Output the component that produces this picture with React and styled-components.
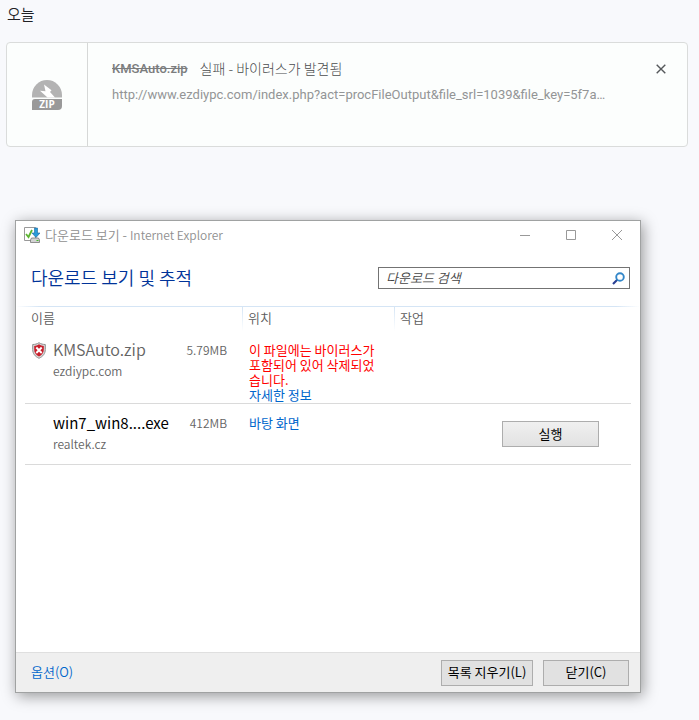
import styled, { createGlobalStyle } from "styled-components";

const GlobalStyle = createGlobalStyle`
  * {
    box-sizing: border-box;
  }

  body {
    margin: 0;
    background-color: #f8f9fc;
    font-family: "Noto Sans CJK KR", sans-serif;
    font-size: 13px;
    font-weight: 350;
  }
`;

const Page = styled.main`
  padding: 3px 11px 27px 6px;
`;

const DateHeading = styled.h2`
  margin: 0 0 17px 1px;
  font-size: 15px;
  font-weight: 350;
  line-height: 22px;
  color: #202124;
`;

const DownloadCard = styled.section`
  display: flex;
  min-height: 105px;
  margin-bottom: 73px;
  background-color: #fcfefd;
  border: 1px solid #dadcdb;
  border-radius: 4px;
`;

const FileIcon = styled.div`
  display: flex;
  align-items: center;
  justify-content: center;
  width: 81px;
  flex-shrink: 0;
  border-right: 1px solid #d6d8d7;
`;

const CardBody = styled.div`
  flex: 1;
  min-width: 0;
  padding: 16px 24px;
`;

const CardTitle = styled.div`
  display: flex;
  gap: 12px;
  height: 20px;
  margin-bottom: 6px;
  line-height: 20px;
  color: #5f6163;
`;

const FileName = styled.s`
  font-family: Roboto, sans-serif;
  font-weight: 500;
  color: #7b7d7e;
`;

const FileStatus = styled.span`
  font-size: 14px;
  font-weight: 300;
  line-height: 18px;
  color: #4a4c4e;
`;

const FileUrl = styled.div`
  overflow: hidden;
  font-family: Roboto, sans-serif;
  font-weight: 400;
  line-height: 20px;
  color: #939596;
  white-space: nowrap;
  text-overflow: ellipsis;
`;

const RemoveButton = styled.button`
  display: flex;
  align-items: center;
  justify-content: center;
  width: 24px;
  height: 24px;
  margin: 14px 14px 0 0;
  padding: 0;
  background: none;
  border: none;
  cursor: pointer;
`;

const Window = styled.section`
  margin: 0 47px 0 9px;
  background-color: #fff;
  border: 1px solid #a0a2a2;
  box-shadow: 2px 3px 14px rgba(0, 0, 0, 0.4);
`;

const TitleBar = styled.header`
  display: flex;
  align-items: center;
  height: 29px;
  padding: 0 0 1px 8px;
  color: #909090;
`;

const TitleText = styled.span`
  flex: 1;
  margin-left: 5px;
  padding-bottom: 2px;
  font-size: 13px;
`;

const AppName = styled.span`
  font-size: 12px;
`;

const WindowButton = styled.button`
  display: flex;
  align-items: center;
  justify-content: center;
  width: 46px;
  height: 28px;
  padding: 0;
  background: none;
  border: none;
`;

const Toolbar = styled.div`
  display: flex;
  align-items: center;
  justify-content: space-between;
  height: 56px;
  padding: 0 10px 0 15px;
`;

const Heading = styled.h1`
  margin: 0;
  padding-bottom: 3px;
  font-size: 18px;
  font-weight: 350;
  color: #003399;
`;

const SearchBox = styled.label`
  display: flex;
  align-items: center;
  width: 252px;
  height: 22px;
  padding: 0 4px 0 7px;
  border: 1px solid #737373;
`;

const SearchInput = styled.input`
  flex: 1;
  min-width: 0;
  padding: 0 0 2px;
  background: none;
  border: none;
  outline: none;
  font-family: inherit;
  font-size: 13px;
  font-weight: 350;

  &::placeholder {
    color: #444;
    font-style: italic;
    opacity: 1;
  }
`;

const Divider = styled.div`
  height: 1px;
  background: linear-gradient(to right, #fff, #d5e5f5 24px, #d5e5f5 calc(100% - 24px), #fff);
`;

const ListArea = styled.div`
  min-height: 345px;
  padding: 0 9px;
`;

const DownloadTable = styled.table`
  width: 100%;
  table-layout: fixed;
  border-spacing: 0;
`;

const HeadCell = styled.th`
  width: ${({ $width }) => $width || "auto"};
  height: 24px;
  padding: 0 6px 4px;
  background: ${({ $divided }) =>
    $divided ? "linear-gradient(#d5e5f5, #fff) left / 1px 100% no-repeat" : "none"};
  font-weight: 350;
  line-height: 15px;
  color: #5c5c5c;
  text-align: left;
`;

const Cell = styled.td`
  height: 61px;
  padding: 11px 7px 1px;
  border-bottom: 1px solid #dadada;
  line-height: 15px;
  vertical-align: top;
`;

const FileEntry = styled.div`
  display: grid;
  grid-template-columns: 14px 1fr auto;
  column-gap: 7px;
  row-gap: 6px;
  padding-right: 8px;
  color: #646464;
`;

const EntryIcon = styled.span`
  height: 15px;
`;

const EntryName = styled.span`
  font-size: ${({ $blocked }) => ($blocked ? "16px" : "15px")};
  font-weight: ${({ $blocked }) => ($blocked ? 350 : 400)};
  color: ${({ $blocked }) => ($blocked ? "#646464" : "#000")};
`;

const EntrySize = styled.span`
  font-size: 12px;
`;

const EntrySite = styled.span`
  grid-column: 2;
  font-size: 12px;
`;

const Warning = styled.div`
  max-width: 132px;
  font-weight: 400;
  color: #ff0000;
  word-break: break-all;
`;

const Link = styled.a`
  font-weight: 400;
  color: #0066cc;
  text-decoration: none;
`;

const Button = styled.button`
  min-width: ${({ $width }) => $width};
  height: 26px;
  padding: 0 5px 2px;
  background: ${({ $raised }) => ($raised ? "linear-gradient(#f0f0f0, #e2e2e2)" : "#e1e1e1")};
  border: 1px solid #adadad;
  font-family: inherit;
  font-size: 13px;
  font-weight: 400;
  line-height: 15px;
  color: #000;
`;

const ActionCell = styled(Cell)`
  padding: 17px 32px 0 0;
  text-align: right;
`;

const Footer = styled.footer`
  display: flex;
  align-items: center;
  gap: 10px;
  height: 40px;
  padding: 0 11px 0 15px;
  background-color: #efefef;
  border-top: 1px solid #dfdfdf;
`;

const FooterLink = styled(Link)`
  margin-right: auto;
  padding-bottom: 2px;
  font-weight: 350;
`;

const ZipIcon = () => (
  <svg width="30" height="30" viewBox="0 0 30 30">
    <path d="M0 17.500V15a15 15 0 0 1 30 0v2.500z" fill="#b3b3b3" />
    <path d="M3 19h27v7a4 4 0 0 1-4 4H0v-8a3 3 0 0 1 3-3z" fill="#999" />
    <path d="M12 4.500L19.500 10.300l-1.500 1.700L23 17.500h-7.500L8 10.800l5.500.5z" fill="#fff" />
    <text
      x="15"
      y="28"
      textAnchor="middle"
      fontFamily="Open Sans, sans-serif"
      fontSize="10"
      fontWeight="700"
      fill="#fff"
    >
      ZIP
    </text>
  </svg>
);

const DownloadsIcon = () => (
  <svg width="16" height="16" viewBox="0 0 16 16">
    <path d="M.5.500h11v13H.5z" fill="#fff" stroke="#999" />
    <path d="M2 7l2.500 3L8 3" fill="none" stroke="#5cb531" strokeWidth="1.800" />
    <path d="M10.500 1h3v5H16l-4 4.500L8 6h2.500z" fill="#299bd8" stroke="#17679f" strokeWidth=".6" />
    <path d="M7.500 11h7l1 2v2.500h-9V13z" fill="#d3d3d3" stroke="#777" strokeWidth=".8" />
    <path d="M12.500 13.500h2" stroke="#42b72a" />
  </svg>
);

const ShieldIcon = () => (
  <svg width="14" height="17" viewBox="0 0 14 17">
    <path
      d="M7 .7c2 1.300 4 1.800 6.300 1.800v5c0 4-2.300 7-6.300 8.800C3 14.500.7 11.500.7 7.500v-5C3 2.500 5 2 7 .7z"
      fill="#d8d8d8"
      stroke="#8f8f8f"
    />
    <path
      d="M7 2.300c1.700 1 3.200 1.500 4.800 1.600v3.700c0 3-1.600 5.500-4.800 7-3.200-1.500-4.800-4-4.800-7V3.900c1.600-.1 3.100-.6 4.800-1.600z"
      fill="#c8202c"
    />
    <path d="M4.300 5.500l5.400 5.500M9.700 5.500L4.300 11" stroke="#fff" strokeWidth="1.900" />
  </svg>
);

const SearchIcon = () => (
  <svg width="13" height="13" viewBox="0 0 13 13" fill="none">
    <path d="M5.500 7.500L1 12" stroke="#283f92" strokeWidth="2.200" />
    <circle cx="8" cy="5" r="3.800" stroke="#3387c9" strokeWidth="1.900" />
  </svg>
);

const windowGlyphs = [
  { label: "최소화", d: "M0 5.500h10" },
  { label: "최대화", d: "M.5.500h9v9h-9z" },
  { label: "닫기", d: "M0 0l10 10M10 0L0 10" },
];

const downloads = [
  {
    name: "KMSAuto.zip",
    site: "ezdiypc.com",
    size: "5.79MB",
    blocked: true,
    warning: "이 파일에는 바이러스가 포함되어 있어 삭제되었습니다.",
    link: "자세한 정보",
  },
  {
    name: "win7_win8....exe",
    site: "realtek.cz",
    size: "412MB",
    link: "바탕 화면",
    action: "실행",
  },
];

const App = () => {
  return (
    <>
      <GlobalStyle />
      <Page>
        <DateHeading>오늘</DateHeading>
        <DownloadCard>
          <FileIcon>
            <ZipIcon />
          </FileIcon>
          <CardBody>
            <CardTitle>
              <FileName>KMSAuto.zip</FileName>
              <FileStatus>실패 - 바이러스가 발견됨</FileStatus>
            </CardTitle>
            <FileUrl>
              http://www.ezdiypc.com/index.php?act=procFileOutput&amp;file_srl=1039&amp;file_key=5f7a…
            </FileUrl>
          </CardBody>
          <RemoveButton aria-label="목록에서 삭제">
            <svg width="10" height="10" viewBox="0 0 10 10" stroke="#55585b" strokeWidth="1.400">
              <path d="M.7.700l8.600 8.600M9.300.700L.7 9.300" />
            </svg>
          </RemoveButton>
        </DownloadCard>

        <Window>
          <TitleBar>
            <DownloadsIcon />
            <TitleText>
              다운로드 보기 - <AppName>Internet Explorer</AppName>
            </TitleText>
            {windowGlyphs.map(({ label, d }) => (
              <WindowButton key={label} aria-label={label}>
                <svg width="10" height="10" viewBox="0 0 10 10" fill="none" stroke="#999">
                  <path d={d} />
                </svg>
              </WindowButton>
            ))}
          </TitleBar>
          <Toolbar>
            <Heading>다운로드 보기 및 추적</Heading>
            <SearchBox>
              <SearchInput type="text" placeholder="다운로드 검색" aria-label="다운로드 검색" />
              <SearchIcon />
            </SearchBox>
          </Toolbar>
          <Divider />
          <ListArea>
            <DownloadTable>
              <thead>
                <tr>
                  <HeadCell $width="217px">이름</HeadCell>
                  <HeadCell $width="152px" $divided>위치</HeadCell>
                  <HeadCell $divided>작업</HeadCell>
                </tr>
              </thead>
              <tbody>
                {downloads.map((item) => (
                  <tr key={item.name}>
                    <Cell>
                      <FileEntry>
                        <EntryIcon>{item.blocked && <ShieldIcon />}</EntryIcon>
                        <EntryName $blocked={item.blocked}>{item.name}</EntryName>
                        <EntrySize>{item.size}</EntrySize>
                        <EntrySite>{item.site}</EntrySite>
                      </FileEntry>
                    </Cell>
                    <Cell>
                      {item.warning && <Warning>{item.warning}</Warning>}
                      <Link href="#">{item.link}</Link>
                    </Cell>
                    <ActionCell>
                      {item.action && <Button $width="97px" $raised>{item.action}</Button>}
                    </ActionCell>
                  </tr>
                ))}
              </tbody>
            </DownloadTable>
          </ListArea>
          <Footer>
            <FooterLink href="#">옵션(O)</FooterLink>
            <Button $width="92px">목록 지우기(L)</Button>
            <Button $width="86px">닫기(C)</Button>
          </Footer>
        </Window>
      </Page>
    </>
  );
};

export default App;
